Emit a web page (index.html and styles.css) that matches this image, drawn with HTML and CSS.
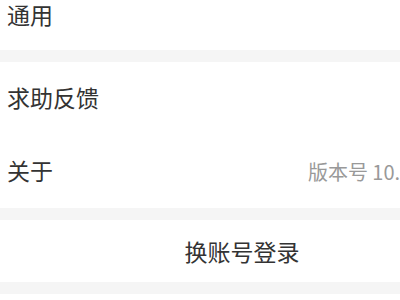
FILE: index.html
```html
<!DOCTYPE html>
<html lang="zh-CN">
<head>
    <meta charset="UTF-8">
    <meta name="viewport" content="width=device-width, initial-scale=1.0">
    <title>设置</title>
    <link rel="stylesheet" href="styles.css">
</head>
<body>
    <div class="settings">
        <div class="group">
            <div class="cell cell-first">
                <span class="cell-title">通用</span>
            </div>
        </div>
        <div class="group">
            <div class="cell">
                <span class="cell-title">求助反馈</span>
            </div>
            <div class="cell">
                <span class="cell-title">关于</span>
                <span class="cell-value">版本号 10.0.11</span>
            </div>
        </div>
        <div class="group">
            <div class="cell cell-action">
                <span class="cell-title">换账号登录</span>
            </div>
        </div>
        <div class="group">
            <div class="cell"></div>
        </div>
    </div>
</body>
</html>
```

FILE: styles.css
```css
html, body {
    margin: 0;
    padding: 0;
    overflow: hidden;
    background-color: #f5f5f5;
}
body {
    font-family: "Noto Sans CJK SC", "Noto Sans", sans-serif;
    color: #333333;
}
.settings {
    width: 484px;
    display: flex;
    flex-direction: column;
    gap: 12px;
}
.group {
    background-color: #ffffff;
}
.cell {
    height: 73px;
    display: flex;
    align-items: center;
    padding: 0 0 0 7px;
}
.cell-first {
    height: 50px;
    align-items: flex-start;
}
.cell-first .cell-title {
    margin-top: -2px;
}
.cell-title {
    font-size: 23px;
    line-height: 32px;
    margin-top: -3px;
}
.cell-value {
    margin-left: auto;
    padding-right: 45px;
    font-size: 20px;
    color: #999999;
}
.cell-action {
    height: 62px;
    justify-content: center;
    padding: 0;
}
.cell-action .cell-title {
    margin-top: 0;
}
```
